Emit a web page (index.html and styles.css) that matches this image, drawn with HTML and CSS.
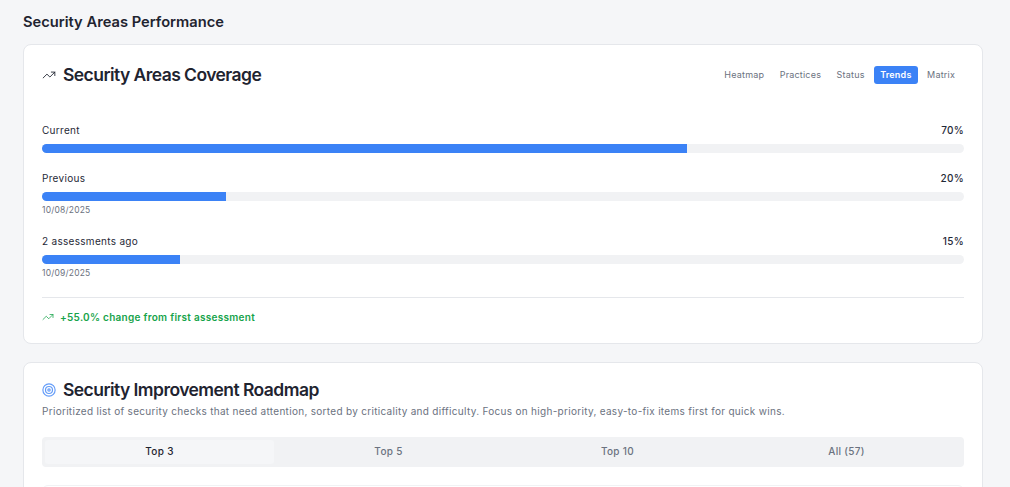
FILE: index.html
```html
<!DOCTYPE html>
<html lang="en">
<head>
<meta charset="utf-8">
<title>Security Areas Performance</title>
<link rel="stylesheet" href="styles.css">
</head>
<body>
<main class="page">
  <h2 class="section-title">Security Areas Performance</h2>
  <section class="card coverage">
    <header class="coverage-head">
      <h3 class="card-title">
        <svg class="icon-title" viewBox="0 0 24 24" fill="none" stroke="#1f2430" stroke-width="1.5" stroke-linecap="round" stroke-linejoin="round"><polyline points="22 7 13.5 15.5 8.5 10.5 2 17"/><polyline points="16 7 22 7 22 13"/></svg>
        Security Areas Coverage
      </h3>
      <nav class="views">
        <span class="view">Heatmap</span>
        <span class="view">Practices</span>
        <span class="view">Status</span>
        <span class="view active">Trends</span>
        <span class="view">Matrix</span>
      </nav>
    </header>
    <div class="trends">
      <div class="trend">
        <div class="trend-row"><span>Current</span><span class="pct">70%</span></div>
        <div class="bar"><div class="fill" style="width:70%"></div></div>
      </div>
      <div class="trend">
        <div class="trend-row"><span>Previous</span><span class="pct">20%</span></div>
        <div class="bar"><div class="fill" style="width:20%"></div></div>
        <div class="date">10/08/2025</div>
      </div>
      <div class="trend">
        <div class="trend-row"><span>2 assessments ago</span><span class="pct">15%</span></div>
        <div class="bar"><div class="fill" style="width:15%"></div></div>
        <div class="date">10/09/2025</div>
      </div>
    </div>
    <footer class="change">
      <svg class="icon-change" viewBox="0 0 24 24" fill="none" stroke="#16a34a" stroke-width="1.5" stroke-linecap="round" stroke-linejoin="round"><polyline points="22 7 13.5 15.5 8.5 10.5 2 17"/><polyline points="16 7 22 7 22 13"/></svg>
      +55.0% change from first assessment
    </footer>
  </section>
  <section class="card roadmap">
    <h3 class="card-title">
      <svg class="icon-title" viewBox="0 0 24 24" fill="none" stroke="#3b82f6" stroke-width="2" stroke-opacity=".8"><circle cx="12" cy="12" r="10.5"/><circle cx="12" cy="12" r="6"/><circle cx="12" cy="12" r="2"/></svg>
      Security Improvement Roadmap
    </h3>
    <p class="desc">Prioritized list of security checks that need attention, sorted by criticality and difficulty. Focus on high-priority, easy-to-fix items first for quick wins.</p>
    <div class="tabs">
      <span class="tab active">Top 3</span>
      <span class="tab">Top 5</span>
      <span class="tab">Top 10</span>
      <span class="tab">All (57)</span>
    </div>
    <div class="next-item"></div>
  </section>
</main>
</body>
</html>
```
FILE: styles.css
```css
* { box-sizing: border-box; }
html, body { margin: 0; height: 100%; overflow: hidden; }
body { background: #f5f6f8; color: #1f2430; font-family: Inter, "Liberation Sans", sans-serif; }
.page { padding: 13px 27px 0 23px; height: 487px; overflow: hidden; }
.section-title { margin: 0 0 12px; font-size: 14.7px; line-height: 19px; font-weight: 600; }
.card { background: #fff; border: 1px solid #e5e7eb; border-radius: 8px; padding: 18px; }
.coverage { height: 300px; margin-bottom: 18px; }
.coverage-head { display: flex; justify-content: space-between; align-items: center; height: 24px; margin-bottom: 36px; }
.card-title { display: flex; align-items: center; gap: 7px; margin: 0; font-size: 17.5px; line-height: 24px; font-weight: 600; letter-spacing: -0.56px; }
.icon-title { width: 14px; height: 14px; flex: none; }
.views { display: flex; gap: 3.5px; padding-right: 3px; }
.view { padding: 0 6px; font-size: 9px; line-height: 18px; font-weight: 400; color: #6b7280; border-radius: 3px; letter-spacing: .2px; }
.view.active { background: #3b82f6; color: #fff; font-weight: 600; }
.trends { display: flex; flex-direction: column; gap: 18px; }
.trend-row { display: flex; justify-content: space-between; font-size: 10px; line-height: 14px; margin-bottom: 7px; letter-spacing: .3px; color: #1f2937; }
.pct { font-weight: 500; }
.bar { height: 9px; background: #f1f2f4; border-radius: 5px; overflow: hidden; }
.fill { height: 100%; background: #3b82f6; }
.date { margin-top: 3px; font-size: 8.5px; line-height: 12px; color: #6b7280; letter-spacing: .2px; }
.change { display: flex; align-items: center; gap: 6px; margin-top: 18px; padding-top: 12px; border-top: 1px solid #e5e7eb; color: #16a34a; font-size: 10px; line-height: 14px; font-weight: 600; letter-spacing: .28px; }
.icon-change { width: 12px; height: 12px; flex: none; }
.roadmap { padding-top: 15px; }
.desc { margin: 2px 0 0; font-size: 10px; line-height: 14px; color: #6b7280; letter-spacing: .3px; }
.tabs { display: grid; grid-template-columns: repeat(4, 1fr); margin-top: 19px; height: 30px; padding: 3px; background: #f1f2f4; border-radius: 4px; }
.tab { display: flex; align-items: center; justify-content: center; padding-bottom: 2px; font-size: 10px; font-weight: 500; color: #6b7280; border-radius: 3px; letter-spacing: .3px; }
.tab.active { background: #f5f6f8; color: #1f2430; }
.next-item { height: 40px; margin-top: 18px; border: 1px solid #f1f2f4; border-radius: 6px; }
```
